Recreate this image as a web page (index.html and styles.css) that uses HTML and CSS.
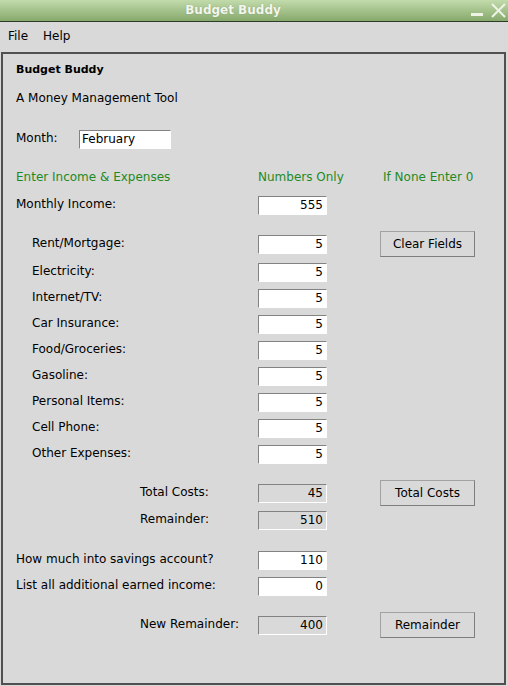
FILE: index.html
```html
<!DOCTYPE html>
<html>
<head>
<meta charset="utf-8">
<title>Budget Buddy</title>
<link rel="stylesheet" href="styles.css">
</head>
<body>
<div class="window">
  <div class="titlebar">
    <span class="title">Budget Buddy</span>
    <svg class="controls" width="42" height="21" viewBox="0 0 42 21">
      <rect x="5" y="13" width="12" height="3" fill="#eef3e6"/>
      <path d="M26 4 L39 17 M39 4 L26 17" stroke="#eef3e6" stroke-width="2" fill="none"/>
    </svg>
  </div>
  <div class="menubar">
    <span class="menu-item">File</span>
    <span class="menu-item">Help</span>
  </div>
  <div class="frame">
    <div class="row first"><span class="heading">Budget Buddy</span></div>
    <div class="row gap-xs"><span class="subtitle">A Money Management Tool</span></div>
    <div class="row month-row gap-l2">
      <span class="label month-label">Month:</span>
      <input class="entry month-entry" type="text" value="February" readonly>
    </div>
    <div class="row gap-l">
      <span class="note">Enter Income &amp; Expenses</span>
      <span class="note">Numbers Only</span>
      <span class="note col3-text">If None Enter 0</span>
    </div>
    <div class="row gap-1">
      <span class="label">Monthly Income:</span>
      <input class="entry" type="text" value="555" readonly>
    </div>
    <div class="row gap-l">
      <span class="label indent">Rent/Mortgage:</span>
      <input class="entry" type="text" value="5" readonly>
      <button class="btn">Clear Fields</button>
    </div>
    <div class="row gap-xs">
      <span class="label indent">Electricity:</span>
      <input class="entry" type="text" value="5" readonly>
    </div>
    <div class="row">
      <span class="label indent">Internet/TV:</span>
      <input class="entry" type="text" value="5" readonly>
    </div>
    <div class="row">
      <span class="label indent">Car Insurance:</span>
      <input class="entry" type="text" value="5" readonly>
    </div>
    <div class="row">
      <span class="label indent">Food/Groceries:</span>
      <input class="entry" type="text" value="5" readonly>
    </div>
    <div class="row">
      <span class="label indent">Gasoline:</span>
      <input class="entry" type="text" value="5" readonly>
    </div>
    <div class="row">
      <span class="label indent">Personal Items:</span>
      <input class="entry" type="text" value="5" readonly>
    </div>
    <div class="row">
      <span class="label indent">Cell Phone:</span>
      <input class="entry" type="text" value="5" readonly>
    </div>
    <div class="row">
      <span class="label indent">Other Expenses:</span>
      <input class="entry" type="text" value="5" readonly>
    </div>
    <div class="row gap-l">
      <span class="label indent-2">Total Costs:</span>
      <input class="entry readonly" type="text" value="45" readonly>
      <button class="btn">Total Costs</button>
    </div>
    <div class="row gap-1">
      <span class="label indent-2">Remainder:</span>
      <input class="entry readonly" type="text" value="510" readonly>
    </div>
    <div class="row gap-l1">
      <span class="label">How much into savings account?</span>
      <input class="entry" type="text" value="110" readonly>
    </div>
    <div class="row">
      <span class="label">List all additional earned income:</span>
      <input class="entry" type="text" value="0" readonly>
    </div>
    <div class="row gap-l">
      <span class="label indent-2">New Remainder:</span>
      <input class="entry readonly" type="text" value="400" readonly>
      <button class="btn">Remainder</button>
    </div>
  </div>
</div>
</body>
</html>
```
FILE: styles.css
```css
* { box-sizing: border-box; }
html, body {
  margin: 0;
  padding: 0;
  background: #d9d9d9;
}
body {
  font-family: "DejaVu Sans", sans-serif;
  font-size: 12px;
  color: #000;
}
.window {
  width: 508px;
  height: 686px;
  display: flex;
  flex-direction: column;
}
.titlebar {
  height: 22px;
  flex: none;
  display: flex;
  align-items: flex-start;
  background: linear-gradient(#c2dbab, #86a96c);
  border-bottom: 1px solid #2f3a28;
}
.title {
  flex: 1;
  text-align: center;
  font-weight: bold;
  font-size: 12px;
  line-height: 21px;
  color: #f4f6ee;
  text-shadow: 0 0 1px rgba(60, 80, 40, 0.4);
}
.controls {
  flex: none;
  display: block;
}
.menubar {
  height: 30px;
  flex: none;
  display: flex;
  gap: 15px;
  padding: 7px 0 0 8px;
  line-height: 14px;
}
.frame {
  margin: 0 2px 1px 1px;
  flex: 1;
  border: 2px solid #505050;
  padding: 1px 0 0 13px;
  display: flex;
  flex-direction: column;
}
.row {
  height: 26px;
  flex: none;
  display: grid;
  grid-template-columns: 242px 122px auto;
  align-items: center;
  line-height: 14px;
}
.first { margin-top: 2px; }
.gap-xs { margin-top: 2px; }
.gap-1 { margin-top: 1px; }
.gap-l { margin-top: 13px; }
.gap-l1 { margin-top: 14px; }
.gap-l2 { margin-top: 15px; }
.heading {
  font-weight: bold;
  font-size: 11px;
}
.label, .note { padding-bottom: 2px; }
.indent { padding-left: 16px; }
.indent-2 { padding-left: 124px; }
.note { color: #1f8a1f; }
.col3-text { padding-left: 3px; }
.month-row {
  display: flex;
}
.month-label { width: 63px; }
.entry {
  width: 69px;
  height: 19px;
  margin: 0;
  padding: 0 3px 0 2px;
  border: 1px solid;
  border-color: #828282 #ffffff #ffffff #828282;
  background: #fff;
  font-family: "DejaVu Sans", sans-serif;
  font-size: 12px;
  color: #000;
  text-align: right;
  outline: none;
}
.entry.readonly { background: #d9d9d9; }
.month-entry {
  width: 92px;
  text-align: left;
}
.btn {
  width: 95px;
  height: 26px;
  margin: 0;
  padding: 0;
  border: 1px solid;
  border-color: #a2a2a2 #7e7e7e #7e7e7e #a2a2a2;
  background: #d9d9d9;
  font-family: "DejaVu Sans", sans-serif;
  font-size: 12px;
  color: #000;
  justify-self: start;
}
```
